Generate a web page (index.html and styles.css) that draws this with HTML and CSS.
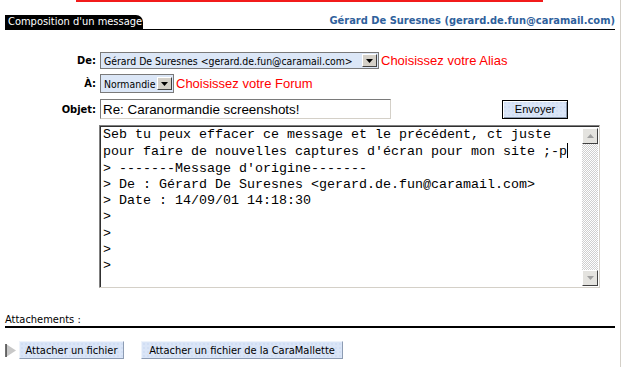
FILE: index.html
```html
<!DOCTYPE html>
<html lang="fr">
<head>
    <meta charset="UTF-8">
    <title>Composition d'un message</title>
    <link rel="stylesheet" href="styles.css">
</head>
<body>
    <div class="page">
        <div class="topbar"></div>

        <!-- En-tete -->
        <div class="heading">
            <span class="tab">Composition d'un message</span>
            <span class="user">Gérard De Suresnes (gerard.de.fun@caramail.com)</span>
        </div>

        <form class="compose">
            <label class="field-label row-de">De:</label>
            <div class="field row-de">
                <span class="select select-alias">
                    <span class="select-value">Gérard De Suresnes &lt;gerard.de.fun@caramail.com&gt;</span>
                    <span class="select-arrow"><svg width="7" height="4" viewBox="0 0 7 4"><path d="M0 0h7L3.5 4z" fill="#000"/></svg></span>
                </span>
                <span class="hint">Choisissez votre Alias</span>
            </div>

            <label class="field-label row-a">À:</label>
            <div class="field row-a">
                <span class="select select-forum">
                    <span class="select-value">Normandie</span>
                    <span class="select-arrow"><svg width="7" height="4" viewBox="0 0 7 4"><path d="M0 0h7L3.5 4z" fill="#000"/></svg></span>
                </span>
                <span class="hint">Choisissez votre Forum</span>
            </div>

            <label class="field-label row-objet">Objet:</label>
            <div class="field row-objet">
                <span class="text-input">Re: Caranormandie screenshots!</span>
                <button type="button" class="send-btn">Envoyer</button>
            </div>

            <div class="message">
                <div class="message-text">Seb tu peux effacer ce message et le précédent, ct juste
pour faire de nouvelles captures d'écran pour mon site ;-p<span class="caret"></span>
&gt; -------Message d'origine-------
&gt; De : Gérard De Suresnes &lt;gerard.de.fun@caramail.com&gt;
&gt; Date : 14/09/01 14:18:30
&gt;
&gt;
&gt;
&gt;</div>
                <div class="scrollbar">
                    <span class="scroll-btn"><svg width="7" height="4" viewBox="0 0 7 4"><path d="M0 4h7L3.5 0z" fill="#a0a0a0"/></svg></span>
                    <span class="scroll-track"></span>
                    <span class="scroll-btn"><svg width="7" height="4" viewBox="0 0 7 4"><path d="M0 0h7L3.5 4z" fill="#a0a0a0"/></svg></span>
                </div>
            </div>
        </form>

        <!-- Attachements -->
        <div class="attach-title">Attachements :</div>
        <div class="attach-row">
            <svg class="attach-arrow" width="12" height="15" viewBox="0 0 12 15">
                <path d="M1 1L11 7.5L1 14z" fill="#c8c8c8"/>
                <path d="M1 1V14" stroke="#404040" stroke-width="1.5"/>
            </svg>
            <button type="button" class="attach-btn">Attacher un fichier</button>
            <button type="button" class="attach-btn attach-btn-wide">Attacher un fichier de la CaraMallette</button>
        </div>
    </div>
</body>
</html>
```

FILE: styles.css
```css
/* Global */
* {
    box-sizing: border-box;
    margin: 0;
    padding: 0;
}

body {
    font-family: 'DejaVu Sans Condensed', 'Liberation Sans', sans-serif;
    background: #fff;
    color: #000;
}

.page {
    width: 621px;
    height: 367px;
    border-right: 1px solid #d4d0c8;
    overflow: hidden;
}

.topbar {
    width: 467px;
    height: 2px;
    margin-left: 76px;
    background-color: #f21b1b;
}

/* Heading */
.heading {
    display: flex;
    justify-content: space-between;
    align-items: flex-end;
    width: 610px;
    margin: 12px 5px 0;
    border-bottom: 1px solid #000;
}

.tab {
    width: 138px;
    height: 14px;
    line-height: 14px;
    padding-left: 3px;
    background-color: #000;
    color: #fff;
    font-size: 11px;
    border-top-right-radius: 7px;
}

.user {
    color: #2f619c;
    font-weight: bold;
    font-size: 11px;
    line-height: 14px;
    padding-bottom: 1px;
}

/* Form */
.compose {
    display: grid;
    grid-template-columns: 96px 1fr;
    grid-template-rows: 17px 18px 20px 163px;
    column-gap: 4px;
    row-gap: 6px;
    margin-top: 22px;
}

.compose .row-a {
    margin-top: -1px;
}

.field-label {
    display: flex;
    align-items: center;
    justify-content: flex-end;
    font-size: 11px;
    font-weight: bold;
}

.field {
    display: flex;
    align-items: center;
}

.select {
    display: flex;
    align-items: center;
    height: 100%;
    border: 1px solid #7a7a7a;
    background-color: #dce7f7;
    font-size: 10.4px;
    padding-left: 3px;
}

.select-alias {
    width: 279px;
}

.select-forum {
    width: 74px;
}

.select-value {
    flex: 1;
    white-space: nowrap;
}

.select-arrow {
    display: flex;
    align-items: center;
    justify-content: center;
    width: 15px;
    height: 13px;
    margin-right: 1px;
    background-color: #d4d0c8;
    border: 1px solid;
    border-color: #fff #404040 #404040 #fff;
}

.hint {
    margin-left: 2px;
    color: #f00;
    font-family: 'Liberation Sans', Arial, sans-serif;
    font-size: 13px;
}

.text-input {
    display: flex;
    align-items: center;
    width: 291px;
    height: 100%;
    padding-left: 2px;
    border: 1px solid;
    border-color: #7a7a7a #d4d0c8 #d4d0c8 #7a7a7a;
    font-family: 'Liberation Sans', Arial, sans-serif;
    font-size: 13.4px;
}

.send-btn {
    width: 66px;
    height: 19px;
    margin-left: 111px;
    font-family: 'Liberation Sans', Arial, sans-serif;
    font-size: 11px;
    color: #000;
    border: 1px solid #000;
    background: #dae5f7 radial-gradient(#c6d5ee 0.6px, transparent 0.8px) 0 0 / 4px 4px;
    box-shadow: inset 1px 1px #fff, inset -1px -1px #8a98ad;
}

/* Message */
.message {
    grid-column: 2;
    display: flex;
    width: 501px;
    margin-left: -1px;
    border: 1px solid;
    border-color: #808080 #d4d0c8 #d4d0c8 #808080;
    box-shadow: inset 1px 1px #303030;
}

.message-text {
    flex: 1;
    padding: 1px 0 0 3px;
    font-family: 'Liberation Mono', 'Courier New', monospace;
    font-size: 13.33px;
    line-height: 16.3px;
    white-space: pre;
    overflow: hidden;
}

.caret {
    display: inline-block;
    width: 0;
    height: 15px;
    border-left: 1px solid #000;
    vertical-align: -3px;
}

.scrollbar {
    display: flex;
    flex-direction: column;
    width: 16px;
    margin: 2px 1px 1px 0;
}

.scroll-btn {
    display: flex;
    align-items: center;
    justify-content: center;
    height: 16px;
    background-color: #e4e3df;
    border: 1px solid;
    border-color: #fff #404040 #404040 #fff;
}

.scroll-track {
    flex: 1;
    background: repeating-conic-gradient(#cfcfcf 0 25%, #fff 0 50%) 0 0 / 2px 2px;
}

/* Attachements */
.attach-title {
    width: 610px;
    margin: 25px 5px 0;
    font-size: 11px;
    line-height: 13px;
    border-bottom: 2px solid #000;
}

.attach-row {
    display: flex;
    align-items: center;
    margin: 13px 0 0 5px;
}

.attach-btn {
    width: 105px;
    height: 18px;
    margin-left: 2px;
    font-family: 'DejaVu Sans Condensed', 'Liberation Sans', sans-serif;
    font-size: 11px;
    color: #000;
    border: 1px solid;
    border-color: #eef3fb #8d9cb3 #8d9cb3 #eef3fb;
    background: #dae5f7 radial-gradient(#c6d5ee 0.6px, transparent 0.8px) 0 0 / 4px 4px;
}

.attach-btn-wide {
    width: 202px;
    margin-left: 17px;
}
```
